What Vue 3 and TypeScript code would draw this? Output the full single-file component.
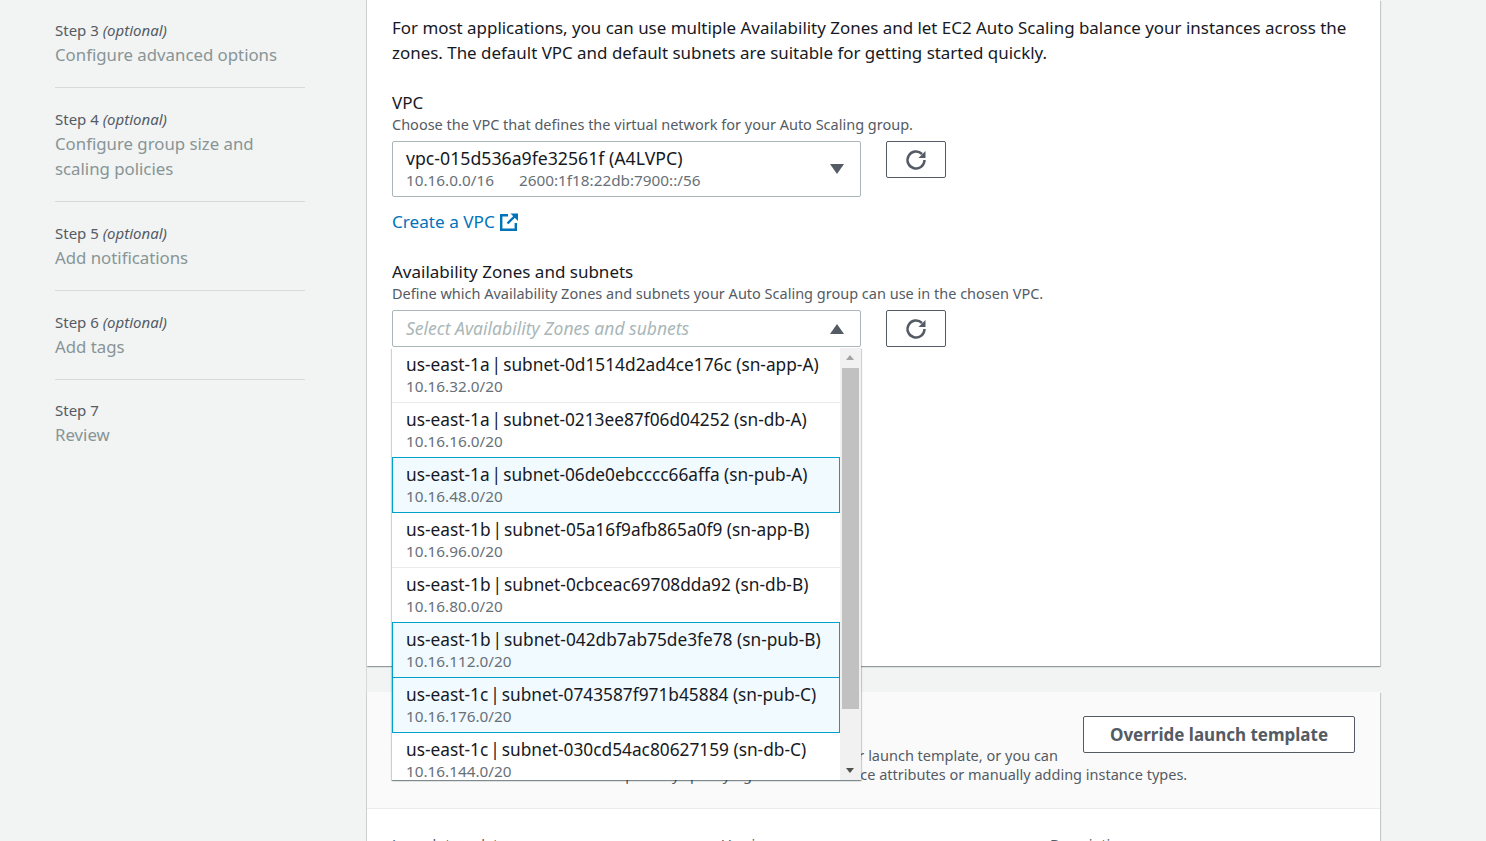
<script setup lang="ts">
interface Step {
  num: number;
  optional: boolean;
  title: string[];
}

interface Subnet {
  zone: string;
  id: string;
  name: string;
  cidr: string;
  selected: boolean;
}

const steps: Step[] = [
  { num: 3, optional: true, title: ['Configure advanced options'] },
  { num: 4, optional: true, title: ['Configure group size and', 'scaling policies'] },
  { num: 5, optional: true, title: ['Add notifications'] },
  { num: 6, optional: true, title: ['Add tags'] },
  { num: 7, optional: false, title: ['Review'] },
];

const subnets: Subnet[] = [
  { zone: 'us-east-1a', id: 'subnet-0d1514d2ad4ce176c', name: 'sn-app-A', cidr: '10.16.32.0/20', selected: false },
  { zone: 'us-east-1a', id: 'subnet-0213ee87f06d04252', name: 'sn-db-A', cidr: '10.16.16.0/20', selected: false },
  { zone: 'us-east-1a', id: 'subnet-06de0ebcccc66affa', name: 'sn-pub-A', cidr: '10.16.48.0/20', selected: true },
  { zone: 'us-east-1b', id: 'subnet-05a16f9afb865a0f9', name: 'sn-app-B', cidr: '10.16.96.0/20', selected: false },
  { zone: 'us-east-1b', id: 'subnet-0cbceac69708dda92', name: 'sn-db-B', cidr: '10.16.80.0/20', selected: false },
  { zone: 'us-east-1b', id: 'subnet-042db7ab75de3fe78', name: 'sn-pub-B', cidr: '10.16.112.0/20', selected: true },
  { zone: 'us-east-1c', id: 'subnet-0743587f971b45884', name: 'sn-pub-C', cidr: '10.16.176.0/20', selected: true },
  { zone: 'us-east-1c', id: 'subnet-030cd54ac80627159', name: 'sn-db-C', cidr: '10.16.144.0/20', selected: false },
];
</script>

<template>
  <div class="page">
    <aside class="sidebar">
      <div v-for="s in steps" :key="s.num" class="step">
        <div class="step-label">Step {{ s.num }} <i v-if="s.optional">(optional)</i></div>
        <div v-for="line in s.title" :key="line" class="step-title">{{ line }}</div>
      </div>
    </aside>

    <main class="main">
      <section class="panel panel-network">
        <p class="intro">
          For most applications, you can use multiple Availability Zones and let EC2 Auto Scaling balance your instances across the zones. The default VPC and default subnets are suitable for getting started quickly.
        </p>

        <div class="field field-vpc">
          <div class="field-label">VPC</div>
          <div class="field-desc">Choose the VPC that defines the virtual network for your Auto Scaling group.</div>
          <div class="select-row">
            <div class="select select-vpc">
              <div class="select-text">
                <div class="select-value">vpc-015d536a9fe32561f (A4LVPC)</div>
                <div class="select-sub"><span>10.16.0.0/16</span><span>2600:1f18:22db:7900::/56</span></div>
              </div>
              <span class="caret caret-down"></span>
            </div>
            <button class="refresh" type="button">
              <svg width="22" height="22" viewBox="0 0 22 22" fill="none">
                <path d="M19.5 11a8.5 8.5 0 1 1-2.5-6" stroke="#545b64" stroke-width="2.5" />
                <path d="M20.5 2v7h-7z" fill="#545b64" />
              </svg>
            </button>
          </div>
          <a class="create-link" href="#">
            Create a VPC
            <svg width="18" height="18" viewBox="0 0 18 18" fill="none">
              <path d="M8 2.2H1.2V16.8H15.8V10" stroke="#0073bb" stroke-width="2.4" />
              <path d="M7.5 10.5 15 3" stroke="#0073bb" stroke-width="2.4" />
              <path d="M10.5 0.5H18V8z" fill="#0073bb" />
            </svg>
          </a>
        </div>

        <div class="field field-az">
          <div class="field-label">Availability Zones and subnets</div>
          <div class="field-desc">Define which Availability Zones and subnets your Auto Scaling group can use in the chosen VPC.</div>
          <div class="select-row">
            <div class="select-wrap">
              <div class="select select-az">
                <span class="placeholder">Select Availability Zones and subnets</span>
                <span class="caret caret-up"></span>
              </div>
              <div class="dropdown">
                <div class="options">
                  <div
                    v-for="n in subnets"
                    :key="n.id"
                    class="option"
                    :class="{ selected: n.selected }"
                  >
                    <div class="option-name"><span class="option-zone">{{ n.zone }} | </span>{{ n.id }} ({{ n.name }})</div>
                    <div class="option-cidr">{{ n.cidr }}</div>
                  </div>
                </div>
                <div class="scrollbar">
                  <span class="sb-arrow sb-up"></span>
                  <div class="sb-thumb"></div>
                  <span class="sb-arrow sb-down"></span>
                </div>
              </div>
            </div>
            <button class="refresh" type="button">
              <svg width="22" height="22" viewBox="0 0 22 22" fill="none">
                <path d="M19.5 11a8.5 8.5 0 1 1-2.5-6" stroke="#545b64" stroke-width="2.5" />
                <path d="M20.5 2v7h-7z" fill="#545b64" />
              </svg>
            </button>
          </div>
        </div>
      </section>

      <section class="panel panel-types">
        <header class="types-head">
          <div class="types-text">
            <h2>Instance type requirements</h2>
            <p>You can keep the same instance attributes or instance type from your launch template, or you can<br />choose to override the launch template by specifying different instance attributes or manually adding instance types.</p>
          </div>
          <button class="override" type="button">Override launch template</button>
        </header>
        <div class="types-body">
          <div>Launch template</div>
          <div>Version</div>
          <div>Description</div>
        </div>
      </section>
    </main>
  </div>
</template>

<style>
html,
body {
  margin: 0;
  overflow: hidden;
}
</style>

<style scoped>
.page {
  display: flex;
  width: 1486px;
  height: 841px;
  overflow: hidden;
  background: #f2f3f3;
  font-family: "Noto Sans", "Open Sans", sans-serif;
  color: #16191f;
}
.sidebar {
  width: 250px;
  flex: none;
  padding: 20px 61px 0 55px;
  border-right: 1px solid #d5dbdb;
}
.step {
  padding-bottom: 20px;
  margin-bottom: 21px;
  border-bottom: 1px solid #d5dbdb;
}
.step:last-child {
  margin-top: -1px;
  border-bottom: none;
}
.step-label {
  margin-bottom: 2px;
  font-size: 15px;
  line-height: 20px;
  color: #545b64;
}
.step-title {
  font-size: 16.8px;
  line-height: 25px;
  color: #879596;
}
.main {
  width: 1013px;
  flex: none;
}
.panel {
  background: #fff;
  width: 1013px;
  box-sizing: border-box;
  box-shadow: 0 1px 1px 0 rgba(0, 28, 36, 0.3), 1px 1px 1px 0 rgba(0, 28, 36, 0.15);
}
.panel-network {
  height: 666px;
  padding: 15px 25px 0;
}
.intro {
  margin: 0;
  font-size: 16.93px;
  line-height: 25px;
  width: 965px;
}
.field-vpc {
  margin-top: 27px;
}
.field-az {
  margin-top: 28px;
}
.field-label {
  font-size: 17px;
  line-height: 22px;
}
.field-desc {
  font-size: 14.5px;
  line-height: 20px;
  color: #545b64;
}
.select-row {
  display: flex;
  align-items: flex-start;
  gap: 25px;
  margin-top: 7px;
}
.select-wrap {
  position: relative;
  width: 469px;
}
.select {
  width: 469px;
  box-sizing: border-box;
  display: flex;
  align-items: center;
  justify-content: space-between;
  padding: 0 16px 0 13px;
  border: 1px solid #aab7b8;
  border-radius: 2px;
  background: #fff;
}
.select-vpc {
  height: 56px;
}
.select-az {
  height: 37px;
}
.select-value {
  margin-bottom: 2px;
  font-size: 17.7px;
  line-height: 20px;
}
.select-sub {
  display: flex;
  gap: 25px;
  font-size: 15.3px;
  line-height: 20px;
  color: #687078;
}
.placeholder {
  padding-bottom: 2px;
  font-size: 17.5px;
  font-style: italic;
  color: #aab7b8;
}
.caret {
  width: 0;
  height: 0;
  border-left: 7px solid transparent;
  border-right: 7px solid transparent;
}
.caret-down {
  border-top: 10px solid #545b64;
}
.caret-up {
  border-bottom: 10px solid #545b64;
}
.refresh {
  width: 60px;
  height: 37px;
  padding: 0;
  display: flex;
  align-items: center;
  justify-content: center;
  background: #fff;
  border: 1px solid #545b64;
  border-radius: 2px;
}
.create-link {
  display: inline-flex;
  align-items: center;
  gap: 5px;
  margin-top: 14px;
  font-size: 17.15px;
  line-height: 22px;
  color: #0073bb;
  text-decoration: none;
}
.dropdown {
  position: absolute;
  top: 38px;
  left: 0;
  z-index: 5;
  width: 469px;
  height: 432px;
  display: flex;
  overflow: hidden;
  background: #fff;
  box-shadow: 0 1px 1px 0 rgba(0, 28, 36, 0.3), 1px 1px 1px 0 rgba(0, 28, 36, 0.15), -1px 1px 1px 0 rgba(0, 28, 36, 0.15);
}
.options {
  width: 448px;
  flex: none;
}
.option {
  height: 55px;
  box-sizing: border-box;
  padding: 6px 13px 0 14px;
  border-bottom: 1px solid #eaeded;
}
.option.selected {
  position: relative;
  height: 56px;
  margin-top: -1px;
  background: #f1faff;
  border: 1px solid #00a1c9;
  padding: 6px 12px 0 13px;
}
.option-name {
  font-size: 17.3px;
  line-height: 22px;
  white-space: nowrap;
}
.option-zone {
  word-spacing: -2.5px;
}
.option-cidr {
  font-size: 15.3px;
  line-height: 20px;
  color: #687078;
}
.scrollbar {
  position: relative;
  flex: 1;
  background: #f1f1f1;
}
.sb-thumb {
  position: absolute;
  top: 20px;
  left: 2px;
  width: 17px;
  height: 341px;
  background: #c1c1c1;
}
.sb-arrow {
  position: absolute;
  left: 6px;
  width: 0;
  height: 0;
  border-left: 4px solid transparent;
  border-right: 4px solid transparent;
}
.sb-up {
  top: 7px;
  border-bottom: 5px solid #a3a3a3;
}
.sb-down {
  bottom: 7px;
  border-top: 5px solid #505050;
}
.panel-types {
  margin-top: 26px;
  height: 200px;
}
.types-head {
  display: flex;
  height: 117px;
  box-sizing: border-box;
  padding: 24px 25px 0;
  background: #fafafa;
  border-bottom: 1px solid #eaeded;
}
.types-text {
  flex: 1;
  min-width: 0;
}
.types-text h2 {
  margin: 0 0 8px;
  font-size: 18px;
  line-height: 22px;
  font-weight: 700;
}
.types-text p {
  margin: 0;
  white-space: nowrap;
  font-size: 14.5px;
  line-height: 19px;
  color: #545b64;
}
.override {
  width: 272px;
  height: 37px;
  flex: none;
  background: #fff;
  border: 1px solid #545b64;
  border-radius: 2px;
  font-family: inherit;
  font-size: 17px;
  font-weight: 700;
  color: #545b64;
}
.types-body {
  display: grid;
  grid-template-columns: 330px 328px 1fr;
  padding: 26px 25px 0;
  font-size: 14.5px;
  line-height: 19px;
  color: #545b64;
}
</style>
